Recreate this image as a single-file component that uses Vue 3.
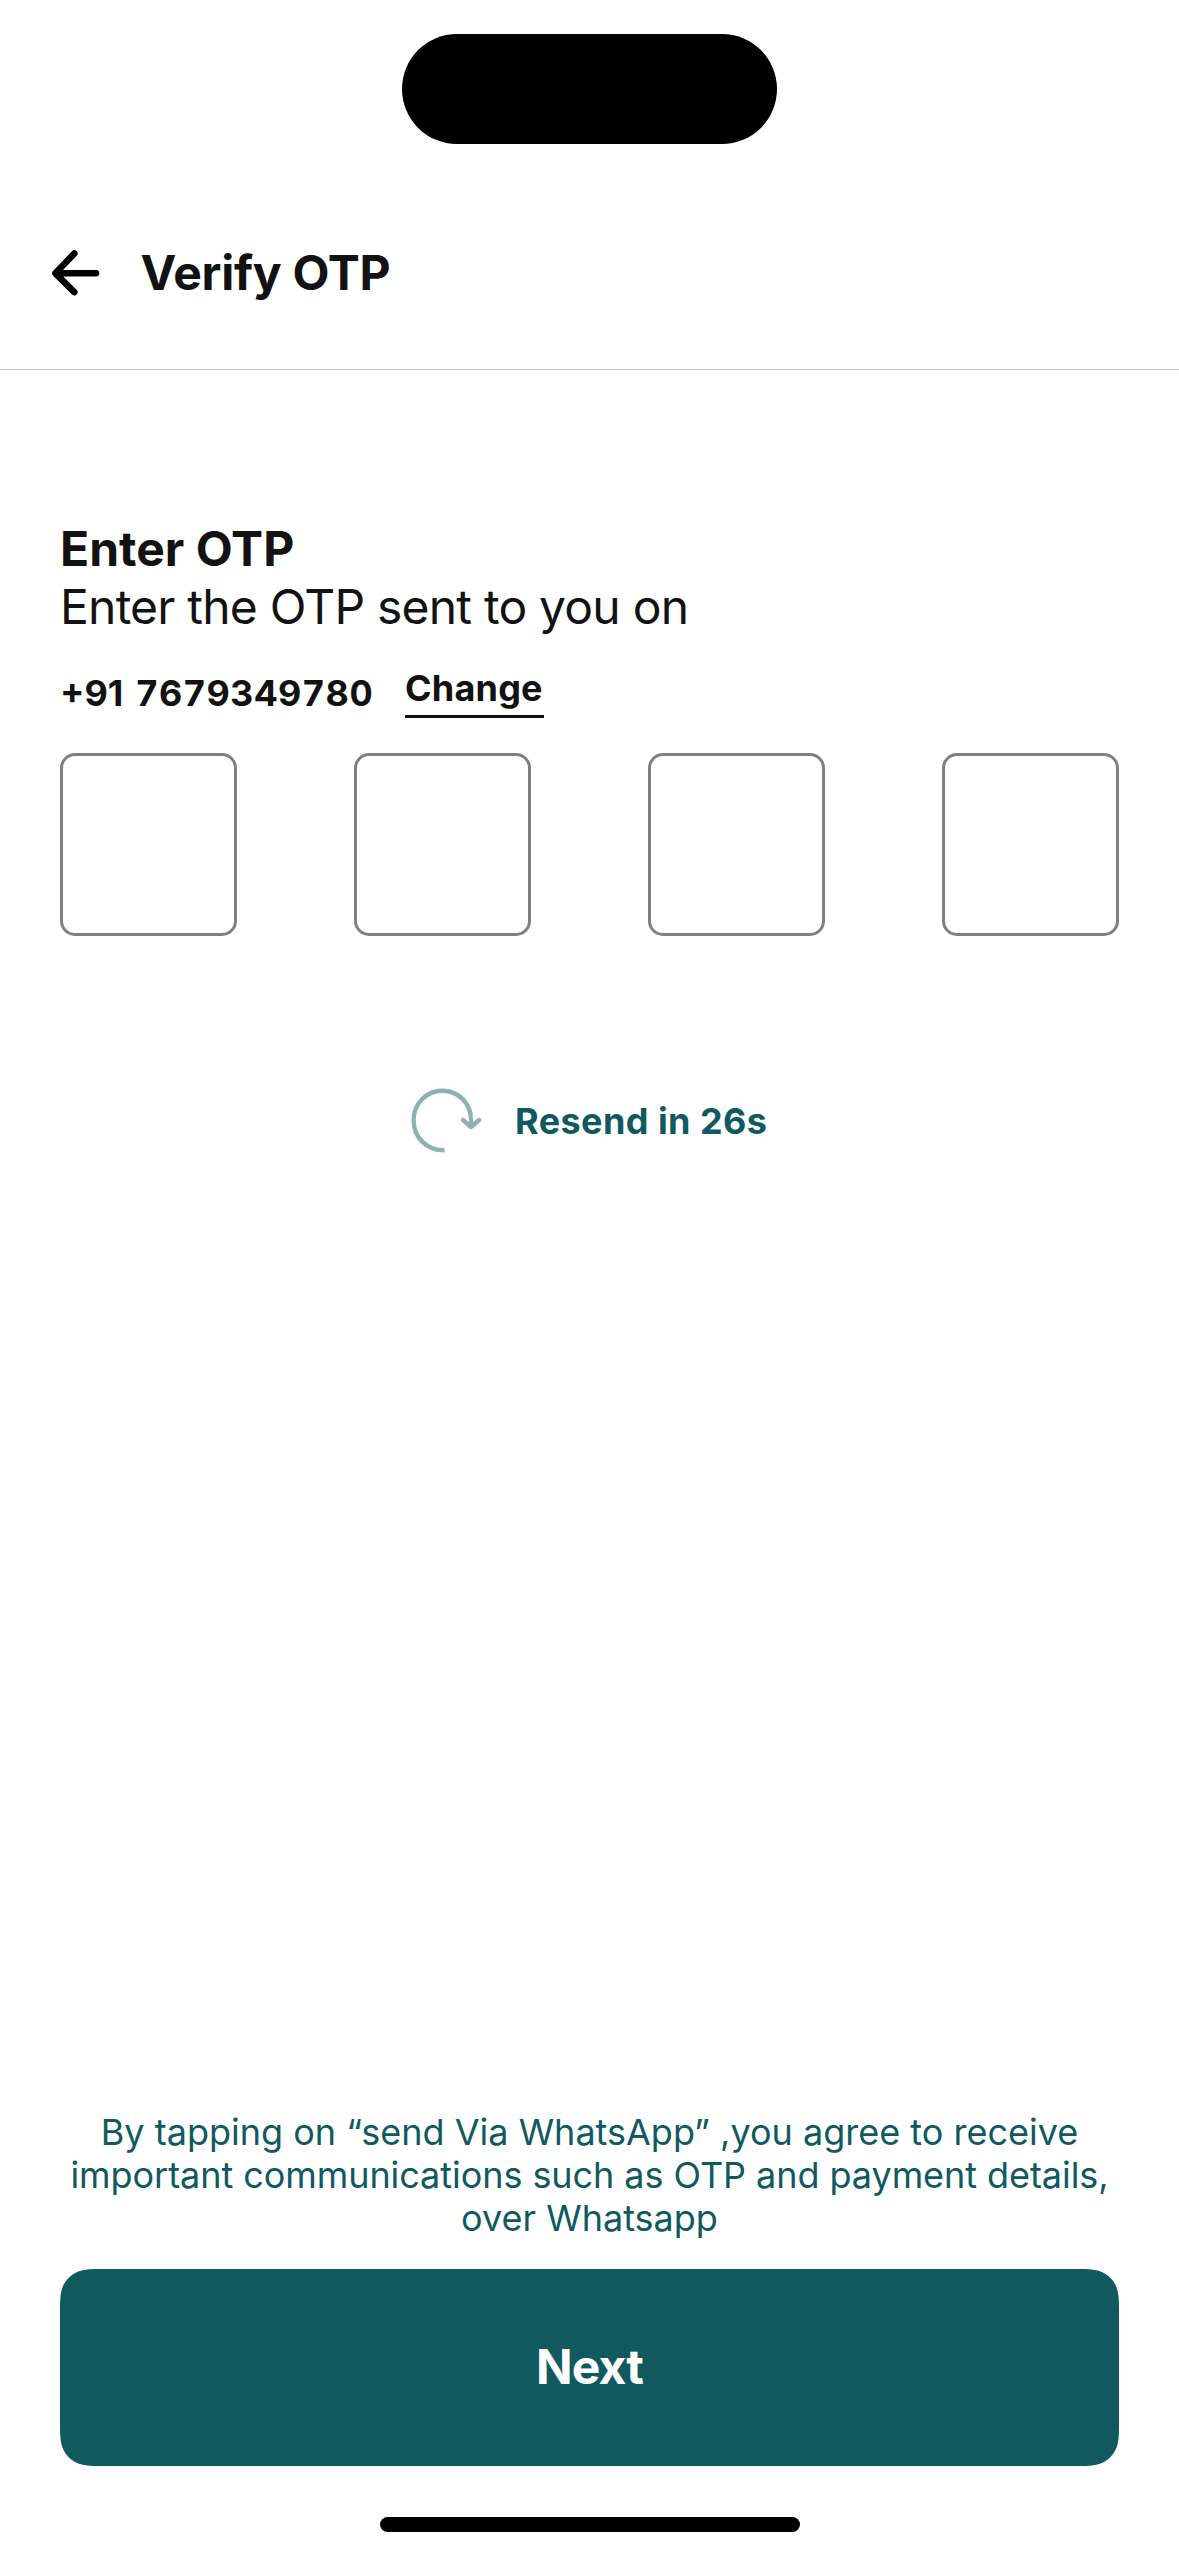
<script setup>
import { ref } from 'vue'

const digits = ref(['', '', '', ''])
const seconds = ref(26)
</script>

<template>
  <main class="screen">
    <div class="island"></div>
    <header class="bar">
      <svg class="back" width="54" height="54" viewBox="0 0 54 54" fill="none" stroke="#000" stroke-width="6.6" stroke-linecap="round" stroke-linejoin="round">
        <path d="M47 27.3H6.5M25.3 7.5 6.4 27.3 25.3 46.1" />
      </svg>
      <h1 class="title">Verify OTP</h1>
    </header>
    <section class="content">
      <h2 class="heading">Enter OTP</h2>
      <p class="sub">Enter the OTP sent to you on</p>
      <div class="phone-row">
        <span class="phone">+91 <span class="num">7679349780</span></span>
        <a class="change">Change</a>
      </div>
      <div class="boxes">
        <div v-for="(d, i) in digits" :key="i" class="box">{{ d }}</div>
      </div>
      <div class="resend">
        <svg width="78" height="72" viewBox="0 0 78 72" fill="none" stroke="#8db1b4" stroke-width="4.4">
          <path d="M38.5 66.3C21 66.8 7.6 53.5 7.6 36.3C7.6 19.5 20.5 6.7 36.3 6.7C52.5 6.7 65 19.5 65 36V43" />
          <path d="M57 36 65 43 73 36" stroke-linecap="round" stroke-linejoin="round" />
        </svg>
        <span class="resend-text">Resend in {{ seconds }}s</span>
      </div>
    </section>
    <footer class="footer">
      <p class="terms">By tapping on “send Via WhatsApp” ,you agree to receive<br /><span class="tight">important communications such as OTP and payment details,</span><br />over Whatsapp</p>
      <button class="next">Next</button>
      <div class="home"></div>
    </footer>
  </main>
</template>

<style>
body {
  margin: 0;
  background: #fff;
}
</style>

<style scoped>
.screen {
  width: 1179px;
  height: 2556px;
  box-sizing: border-box;
  padding-top: 34px;
  display: flex;
  flex-direction: column;
  background: #fff;
  color: #121212;
  font-family: Inter, "Liberation Sans", sans-serif;
  overflow: hidden;
}
h1, h2, p {
  margin: 0;
}
.island {
  width: 375px;
  height: 110px;
  border-radius: 55px;
  background: #000;
  align-self: center;
  flex: none;
}
.bar {
  height: 226px;
  box-sizing: border-box;
  flex: none;
  display: flex;
  align-items: flex-start;
  padding: 102px 0 0 49px;
  border-bottom: 1px solid #c6c6d0;
}
.title {
  margin-left: 37.5px;
  font-size: 48px;
  line-height: 53px;
  font-weight: 700;
  letter-spacing: -0.25px;
}
.content {
  padding: 150px 60px 0;
}
.heading {
  font-size: 48px;
  line-height: 57px;
  font-weight: 700;
}
.sub {
  margin-top: 1px;
  font-size: 48px;
  line-height: 57px;
  letter-spacing: -0.785px;
}
.phone-row {
  display: flex;
  align-items: flex-start;
  margin-top: 31px;
  height: 87px;
  font-size: 36px;
  line-height: 44px;
  font-weight: 700;
}
.phone {
  width: 345px;
  margin-top: 5px;
}
.num {
  margin-left: 3.3px;
  font-variant-numeric: tabular-nums;
  letter-spacing: 0.53px;
}
.change {
  width: 139px;
  height: 49px;
  border-bottom: 3px solid #121212;
  letter-spacing: 0.2px;
}
.boxes {
  display: flex;
  justify-content: space-between;
}
.box {
  width: 177px;
  height: 183px;
  box-sizing: border-box;
  border: 3px solid #808080;
  border-radius: 15px;
}
.resend {
  display: flex;
  align-items: center;
  margin: 148px 0 0 346px;
  color: #105a5f;
  font-size: 36px;
  line-height: 44px;
  font-weight: 700;
}
.resend-text {
  margin-left: 31px;
  padding-top: 2px;
  letter-spacing: 0.43px;
}
.footer {
  margin-top: auto;
  padding: 0 60px 24px;
  display: flex;
  flex-direction: column;
  align-items: center;
}
.terms {
  color: #105a5f;
  font-size: 36px;
  line-height: 43px;
  text-align: center;
  white-space: nowrap;
}
.tight {
  letter-spacing: -0.06px;
}
.next {
  margin-top: 29.5px;
  width: 1059px;
  height: 197px;
  padding: 0 0 2px;
  border: 0;
  background: #105a5f;
  color: #fff;
  font-family: inherit;
  font-size: 48px;
  font-weight: 700;
  letter-spacing: -0.8px;
  /* continuous-curvature corners */
  clip-path: path("M45.86 0H1013.14C1026.35 0 1032.95 0 1040.06 2.25C1047.82 5.07 1053.93 11.18 1056.75 18.94C1059 26.05 1059 32.65 1059 45.86V151.14C1059 164.35 1059 170.95 1056.75 178.06C1053.93 185.82 1047.82 191.93 1040.06 194.75C1032.95 197 1026.35 197 1013.14 197H45.86C32.65 197 26.05 197 18.94 194.75C11.18 191.93 5.07 185.82 2.25 178.06C0 170.95 0 164.35 0 151.14V45.86C0 32.65 0 26.05 2.25 18.94C5.07 11.18 11.18 5.07 18.94 2.25C26.05 0 32.65 0 45.86 0Z");
}
.home {
  margin-top: 51px;
  width: 420px;
  height: 15px;
  border-radius: 8px;
  background: #000;
}
</style>
